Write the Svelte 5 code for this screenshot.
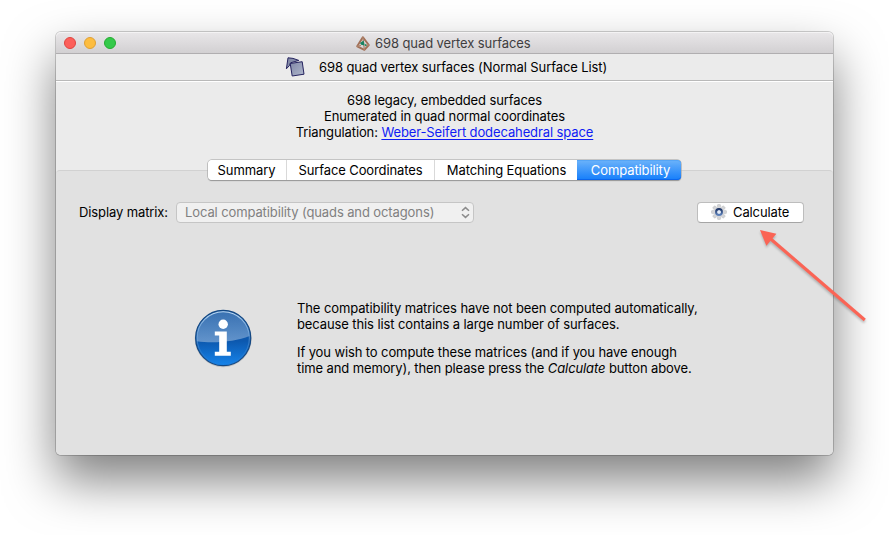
<script>
  const tabs = [
    { label: 'Summary', width: 79 },
    { label: 'Surface Coordinates', width: 148 },
    { label: 'Matching Equations', width: 142 },
    { label: 'Compatibility', width: 104 }
  ];
  let active = $state(3);
  const teeth = [0, 45, 90, 135, 180, 225, 270, 315];
</script>

<div class="desktop">
  <main class="window">
    <header class="titlebar">
      <div class="lights"><i class="red"></i><i class="yellow"></i><i class="green"></i></div>
      <div class="title">
        <svg width="14" height="15" viewBox="0 0 14 15" fill="none" stroke-linejoin="round">
          <path d="M6.8 1.2 1.2 10.3 8.4 13.8 12.8 9z" stroke="#a07058" stroke-width="1.9" />
          <path d="M6.8 1.2 8.4 13.8M1.2 10.3 5 9.3M9.6 9.1l3.2-.1" stroke="#b2866d" stroke-width="1.3" />
          <path d="M4 7 7.6 4.6 8.6 9.6 5.2 8.8z" fill="#168260" />
          <path d="m9 7.8 2 1.4-2 1.4z" fill="#238b68" />
        </svg>
        <span>698 quad vertex surfaces</span>
      </div>
    </header>

    <div class="packet">
      <svg width="20" height="20" viewBox="0 0 20 20">
        <defs>
          <linearGradient id="sheet" x1="0" y1="0" x2="1" y2="1">
            <stop offset="0" stop-color="#8087a6" /><stop offset="1" stop-color="#b0b8cd" />
          </linearGradient>
        </defs>
        <g stroke="#25235f" stroke-width="1" stroke-linejoin="round">
          <path d="M3 .8 8 1.4 13.8 3.4 5.6 5.8 4.6 8.4 1.4 11.8z" fill="#858ca8" />
          <path d="M5.2 6.5 17.2 4.7 19 17.2 7.2 19z" fill="url(#sheet)" />
        </g>
      </svg>
      <span>698 quad vertex surfaces (Normal Surface List)</span>
    </div>

    <section class="info">
      <div>698 legacy, embedded surfaces</div>
      <div>Enumerated in quad normal coordinates</div>
      <div>Triangulation: <a href="#space">Weber-Seifert dodecahedral space</a></div>
    </section>

    <section class="pane">
      <nav class="tabs">
        {#each tabs as tab, i}
          <button class="tab" class:active={active === i} style:width="{tab.width}px" onclick={() => (active = i)}>{tab.label}</button>
        {/each}
      </nav>

      <div class="controls">
        <span class="label">Display matrix:</span>
        <div class="select">
          <span>Local compatibility (quads and octagons)</span>
          <svg width="9" height="13" viewBox="0 0 9 13" fill="none" stroke="#8b8b8b" stroke-width="1.5"><path d="M1 4.8 4.5 1.6 8 4.8M1 8.2l3.5 3.2L8 8.2" /></svg>
        </div>
        <button class="calculate">
          <svg width="16" height="16" viewBox="0 0 16 16">
            <defs>
              <linearGradient id="hub" x1="0" y1="0" x2="0" y2="1">
                <stop offset="0" stop-color="#1e3566" /><stop offset="1" stop-color="#5c80b9" />
              </linearGradient>
            </defs>
            {#each teeth as angle}
              <rect x="6.4" y=".5" width="3.2" height="4" rx=".8" fill="#d2d3d5" stroke="#b9babd" stroke-width=".5" transform="rotate({angle} 8 8)" />
            {/each}
            <circle cx="8" cy="8" r="5.8" fill="#d4d5d8" />
            <circle cx="8" cy="8" r="2.9" fill="#f3f7fd" stroke="url(#hub)" stroke-width="2.1" />
            <circle cx="8.2" cy="8" r="1.4" fill="#e4edf9" />
          </svg>
          <span>Calculate</span>
        </button>
      </div>

      <div class="notice">
        <svg width="60" height="60" viewBox="0 0 60 60">
          <defs>
            <linearGradient id="ball" x1="0" y1="0" x2="0" y2="1">
              <stop offset="0" stop-color="#1d5da6" /><stop offset=".55" stop-color="#0c58ae" /><stop offset="1" stop-color="#1684eb" />
            </linearGradient>
            <linearGradient id="gloss" x1="0" y1="0" x2="0" y2="1">
              <stop offset="0" stop-color="#fff" stop-opacity=".13" /><stop offset="1" stop-color="#fff" stop-opacity=".36" />
            </linearGradient>
            <linearGradient id="rim" x1="0" y1="0" x2="0" y2="1">
              <stop offset="0" stop-color="#c7e1f8" stop-opacity=".95" /><stop offset=".55" stop-color="#83b7e7" stop-opacity=".4" /><stop offset="1" stop-color="#2678cd" stop-opacity=".15" />
            </linearGradient>
          </defs>
          <circle cx="30.2" cy="30.7" r="28.5" fill="#777" opacity=".3" />
          <circle cx="30.2" cy="30" r="27.6" fill="url(#ball)" stroke="#124783" stroke-width="1.1" />
          <path d="M3.8 33.2C20 35.5 42 34 56.6 28A26.4 26.4 0 1 0 3.8 33.2z" fill="url(#gloss)" />
          <circle cx="30.2" cy="30" r="26.2" fill="none" stroke="url(#rim)" stroke-width="1.1" />
          <g fill="#fff">
            <circle cx="30.2" cy="16.3" r="4.7" />
            <path d="M21.8 23.5h12v20.3h4v4h-16v-4h4.4V27.5h-4.4z" />
          </g>
        </svg>
        <div class="message">
          <p>The compatibility matrices have not been computed automatically,<br />because this list contains a large number of surfaces.</p>
          <p>If you wish to compute these matrices (and if you have enough<br />time and memory), then please press the <em>Calculate</em> button above.</p>
        </div>
      </div>
    </section>
  </main>

  <svg class="arrow" width="889" height="535" viewBox="0 0 889 535">
    <path d="M864.8 320 769 237.5" stroke="#fa6455" stroke-width="3.2" />
    <path d="M760 230 776.4 233.8 766.4 245.8z" fill="#fa6455" />
  </svg>
</div>

<style>
  :global(body) { margin: 0; background: #fff; }
  .desktop {
    position: relative;
    box-sizing: border-box;
    width: 889px;
    height: 535px;
    padding: 32px 56px 80px;
    overflow: hidden;
    background: #fff;
    color: #000;
    font: 13px/16px Inter, 'Liberation Sans', sans-serif;
    letter-spacing: -.108px;
    white-space: nowrap;
  }
  .window {
    display: flex;
    flex-direction: column;
    width: 777px;
    height: 423px;
    border-radius: 5px;
    background: #ebebeb;
    box-shadow: 0 0 0 1px rgba(0, 0, 0, .18), 0 25px 50px rgba(0, 0, 0, .5);
  }
  .titlebar {
    display: flex;
    align-items: center;
    box-sizing: border-box;
    height: 22px;
    padding-left: 8px;
    border-bottom: 1px solid #b0aeb0;
    border-radius: 5px 5px 0 0;
    background: linear-gradient(#e9e7e9, #d2d0d2);
    box-shadow: inset 0 1px #f4f3f4;
  }
  .lights { display: flex; gap: 8px; width: 292px; margin-top: 1px; }
  .lights i { box-sizing: border-box; width: 12px; height: 12px; border-radius: 50%; border: 1px solid; }
  .lights .red { background: #fc5f5a; border-color: #e0443f; }
  .lights .yellow { background: #fdbd40; border-color: #e0a034; }
  .lights .green { background: #34c94a; border-color: #24ac30; }
  .title { display: flex; align-items: center; gap: 5px; color: #3f3e3f; padding-top: 1px; letter-spacing: -.09px; }
  .packet {
    display: flex;
    align-items: center;
    box-sizing: border-box;
    height: 28px;
    padding: 0 0 1px 229px;
    gap: 14px;
    border-bottom: 1px solid #fff;
    box-shadow: inset 0 -1px #b9b9b9;
    letter-spacing: -.09px;
  }
  .info { height: 60px; padding-top: 10px; text-align: center; box-sizing: border-box; }
  .info a { color: #0f1cf5; text-decoration: underline; text-underline-offset: 2px; }
  .pane {
    box-sizing: border-box;
    margin-top: 28px;
    flex: 1;
    border-top: 1px solid #d1d1d1;
    border-radius: 4px 4px 5px 5px;
    background: #e1e1e1;
  }
  .tabs { display: flex; width: 473px; height: 20px; margin: -11px 0 0 152px; border-radius: 4px; box-shadow: 0 0 0 .6px #a8a8a8, 0 .5px 1px #888; }
  .tab { padding: 0; border: 0; border-right: 1px solid #d9d9d9; box-sizing: border-box; background: #fff; font: inherit; letter-spacing: inherit; color: #000; }
  .tab:first-child { border-radius: 4px 0 0 4px; padding-right: 1px; }
  .tab:nth-child(3) { padding-left: 1px; border-right: 0; }
  .tab:last-child { border-radius: 0 4px 4px 0; border-right: 0; padding-left: 3px; }
  .tab.active { color: #fff; background: linear-gradient(#6cb3fa, #157efb); box-shadow: inset 0 -1px #0b66ed, inset 0 1px #55a5f6; }
  .controls { display: flex; align-items: center; height: 22px; margin-top: 21px; padding: 0 29px 0 23px; }
  .label { width: 97px; }
  .select {
    display: flex;
    align-items: center;
    justify-content: space-between;
    box-sizing: border-box;
    width: 298px;
    height: 21px;
    padding: 0 3px 0 8px;
    border: 1px solid #c5c5c5;
    border-radius: 4px;
    background: #f0f0f0;
    color: #808080;
  }
  .calculate {
    display: flex;
    align-items: center;
    box-sizing: border-box;
    width: 107px;
    height: 21px;
    margin-left: auto;
    padding: 0 0 0 13px;
    gap: 6px;
    border: 1px solid #bdbdbd;
    border-bottom-color: #a5a5a5;
    border-radius: 4px;
    background: #fff;
    color: #000;
    font: inherit;
    letter-spacing: inherit;
  }
  .notice { display: flex; margin-top: 77px; padding-left: 137px; gap: 44px; }
  .notice svg { margin-top: 8px; }
  p { margin: 0 0 12px; }
  .arrow { position: absolute; left: 0; top: 0; pointer-events: none; filter: drop-shadow(0 2px 1px rgba(0, 0, 0, .22)); }
</style>
